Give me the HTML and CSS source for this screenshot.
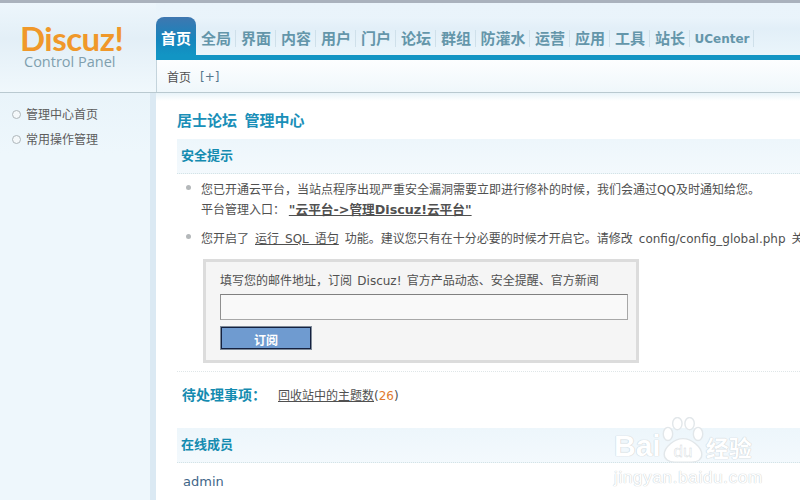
FILE: index.html
```html
<!DOCTYPE html>
<html lang="zh-CN">
<head>
    <meta charset="UTF-8">
    <title>Discuz! Control Panel</title>
    <link rel="stylesheet" href="styles.css">
</head>
<body>
    <div class="header">
        <div class="logo">
            <div class="logo-name">Discuz!</div>
            <div class="logo-sub">Control Panel</div>
        </div>
        <div class="header-right">
            <ul class="tabs">
                <li class="tab active">首页</li>
                <li class="tab">全局</li>
                <li class="tab">界面</li>
                <li class="tab">内容</li>
                <li class="tab">用户</li>
                <li class="tab">门户</li>
                <li class="tab">论坛</li>
                <li class="tab">群组</li>
                <li class="tab wide">防灌水</li>
                <li class="tab">运营</li>
                <li class="tab">应用</li>
                <li class="tab">工具</li>
                <li class="tab">站长</li>
                <li class="tab uc">UCenter</li>
            </ul>
            <div class="subnav"><span>首页</span><span class="plus">[+]</span></div>
        </div>
    </div>

    <div class="page">
        <div class="sidebar">
            <div class="side-item">管理中心首页</div>
            <div class="side-item">常用操作管理</div>
        </div>
        <div class="main">
            <h1>居士论坛&nbsp; 管理中心</h1>

            <div class="section-head">安全提示</div>
            <ul class="tips">
                <li>您已开通云平台，当站点程序出现严重安全漏洞需要立即进行修补的时候，我们会通过QQ及时通知给您。<br>平台管理入口： <a class="strong-link" href="#">"云平台-&gt;管理Discuz!云平台"</a></li>
                <li class="tip-wide">您开启了 <a href="#">运行 SQL 语句</a> 功能。建议您只有在十分必要的时候才开启它。请修改 config/config_global.php 关</li>
            </ul>

            <div class="subscribe">
                <div class="subscribe-label">填写您的邮件地址，订阅 Discuz! 官方产品动态、安全提醒、官方新闻</div>
                <input class="subscribe-input" type="text">
                <button class="subscribe-btn">订阅</button>
            </div>

            <div class="pending">
                <strong>待处理事项：</strong>
                <span><a href="#">回收站中的主题数</a>(<em>26</em>)</span>
            </div>

            <div class="section-head">在线成员</div>
            <div class="online">admin</div>
        </div>
    </div>

    <!-- watermark -->
    <div class="watermark">
        <div class="wm-top">
            <span>Bai</span>
            <svg class="wm-paw" width="42" height="47" viewBox="0 0 44 50">
                <g fill="#fff" stroke="#e2e7ea" stroke-width="1.5">
                    <ellipse cx="6" cy="18" rx="5" ry="7"/>
                    <ellipse cx="16" cy="7" rx="5" ry="6.5"/>
                    <ellipse cx="29" cy="7" rx="5" ry="6.5"/>
                    <ellipse cx="38" cy="18" rx="5" ry="7"/>
                    <path d="M22 23c9 0 20 9 20 17 0 6-6 8-11 8H13c-6 0-11-3-11-8 0-8 11-17 20-17z"/>
                </g>
                <text x="22" y="43" class="wm-du">du</text>
            </svg>
            <span class="wm-cn">经验</span>
        </div>
        <div class="wm-url">jingyan.baidu.com</div>
    </div>
</body>
</html>
```

FILE: styles.css
```css
* {
    box-sizing: border-box;
}
html, body {
    height: 100%;
}
body {
    margin: 0;
    width: 800px;
    height: 503px;
    overflow: hidden;
    position: relative;
    background-color: #ffffff;
    font-family: "DejaVu Sans", "Noto Sans CJK SC", sans-serif;
    font-size: 12px;
    color: #505050;
}
a {
    color: #505050;
}

/* header */
.header {
    display: flex;
    height: 93px;
    border-top: 3px solid #aab2bd;
    border-bottom: 1px solid #b9c9d0;
    background: linear-gradient(#eaf4fb, #e8f3fa 60%, #eff8fc);
}
.logo {
    width: 156px;
    flex: none;
    padding: 20px 0 0 20px;
    background: linear-gradient(#edf6fc, #e3eff7 40%, #f0f8fc);
}
.logo-name {
    font-family: Lato, sans-serif;
    font-weight: 700;
    font-size: 33px;
    line-height: 30px;
    color: #f0982a;
    letter-spacing: -0.5px;
}
.logo-sub {
    font-family: "Open Sans", sans-serif;
    font-size: 14.5px;
    line-height: 18px;
    padding-left: 4px;
    color: #7f9fae;
}
.header-right {
    flex: 1;
    min-width: 0;
    padding-top: 14px;
    display: flex;
    flex-direction: column;
}
.tabs {
    display: flex;
    list-style: none;
    margin: 0;
    padding: 0;
    height: 43px;
    border-bottom: 5px solid #1295c4;
    background: linear-gradient(#eaf4fb 0, #e2eff8 30%, #eaf5fb);
}
.tab {
    width: 40px;
    height: 38px;
    padding-top: 11px;
    text-align: center;
    font-size: 15px;
    line-height: 22px;
    font-weight: 700;
    color: #6496aa;
    position: relative;
}
.tab::after {
    content: "";
    position: absolute;
    right: 0;
    top: 13px;
    height: 17px;
    width: 1px;
    background-color: #cfe0ea;
}
.tab.wide {
    width: 54px;
}
.tab.uc {
    width: 64px;
    font-size: 12px;
}
.tab.active {
    color: #ffffff;
    border-radius: 8px 8px 0 0;
    background: linear-gradient(#3f77b0, #1585bd 60%, #1295c4);
}
.tab.active::after {
    display: none;
}
.subnav {
    flex: 1;
    display: flex;
    gap: 9px;
    align-items: center;
    padding: 1px 0 0 10px;
    background: linear-gradient(#fdfeff, #eff7fb);
    border-left: 1px solid #c4d4dc;
    color: #505050;
}
.plus {
    color: #55768c;
}

/* body part */
.page {
    display: flex;
    height: 407px;
}
.sidebar {
    width: 156px;
    flex: none;
    padding-top: 10px;
    background: linear-gradient(#e9f4fa, #eef7fc 60px);
    border-right: 6px solid #dbe9f3;
}
.side-item {
    height: 25px;
    line-height: 25px;
    padding-left: 26px;
    color: #5c5c5c;
    position: relative;
}
.side-item::before {
    content: "";
    position: absolute;
    left: 12px;
    top: 7px;
    width: 7px;
    height: 7px;
    border: 1px solid #aeb6ba;
    border-radius: 50%;
    background-color: #f4f8fa;
}
.main {
    flex: 1;
    min-width: 0;
    padding: 0 0 0 21px;
    background: linear-gradient(#e8f3f9, #ffffff 8px);
}
h1 {
    margin: 0;
    padding-top: 17px;
    height: 46px;
    font-size: 15px;
    line-height: 22px;
    word-spacing: -1.5px;
    color: #1a8fb8;
    white-space: nowrap;
}
.section-head {
    height: 35px;
    line-height: 34px;
    padding-left: 4px;
    font-size: 13px;
    font-weight: 700;
    color: #148bb0;
    background: linear-gradient(#edf6fb, #f3f9fd);
    border-bottom: 1px dotted #d4e3e6;
}
.tips {
    list-style: none;
    margin: 0;
    padding: 7px 0 0 24px;
    white-space: nowrap;
    overflow: hidden;
}
.tips li {
    position: relative;
    line-height: 19px;
    margin-bottom: 10px;
}
.tips li::before {
    content: "";
    position: absolute;
    left: -15px;
    top: 4px;
    width: 5px;
    height: 5px;
    border-radius: 50%;
    background-color: #b4b8ba;
}
.tips .tip-wide {
    word-spacing: 2.2px;
}
.strong-link {
    font-size: 12.7px;
    font-weight: 700;
}
.subscribe {
    width: 436px;
    height: 104px;
    margin: 0 0 0 26px;
    padding: 10px 0 0 14px;
    border: 3px solid #dcdcdc;
    background-color: #f5f5f5;
}
.subscribe-label {
    line-height: 18px;
    word-spacing: 1.5px;
    white-space: nowrap;
}
.subscribe-input {
    display: block;
    width: 408px;
    height: 26px;
    margin: 4px 0 6px;
    border: 1px solid #a8a8a8;
    border-top-color: #808080;
    border-left-color: #909090;
    background-color: #f9f9f9;
}
.subscribe-btn {
    display: block;
    width: 92px;
    height: 24px;
    padding: 3px 0 0;
    border: 2px solid #15213f;
    outline: 1px solid #7f8a98;
    outline-offset: -1px;
    background-color: #6f9bd0;
    color: #ffffff;
    font-family: inherit;
    font-size: 12px;
    font-weight: 700;
}
.pending {
    display: flex;
    align-items: center;
    gap: 12px;
    height: 57px;
    margin-top: 8px;
    padding: 0 0 12px 5px;
    border-top: 1px dotted #dfe6e8;
}
.pending strong {
    font-size: 14px;
    color: #148bb0;
}
.pending em {
    font-style: normal;
    color: #e07b2e;
}
.online {
    padding: 10px 0 0 6px;
    line-height: 18px;
    font-size: 13px;
    color: #3f6688;
}

/* watermark, lies over the page */
.watermark {
    position: absolute;
    left: 614px;
    top: 417px;
    color: #ffffff;
    font-family: "Liberation Sans", "Noto Sans CJK SC", sans-serif;
    text-shadow: 0 0 1px #c6cdd2, 0 0 1px #c6cdd2;
}
.wm-top {
    display: flex;
    align-items: flex-end;
    height: 47px;
    font-size: 30px;
    line-height: 36px;
    font-weight: 700;
}
.wm-paw {
    margin-left: 1px;
    flex: none;
}
.wm-du {
    font-size: 18px;
    font-weight: 400;
    text-anchor: middle;
    fill: #ffffff;
    stroke: #ced4d8;
    stroke-width: 0.4;
    text-shadow: none;
}
.wm-cn {
    font-size: 23px;
    line-height: 30px;
    margin-left: 2px;
}
.wm-url {
    font-size: 17px;
    line-height: 20px;
    margin-top: 4px;
    letter-spacing: 0.7px;
}
```
